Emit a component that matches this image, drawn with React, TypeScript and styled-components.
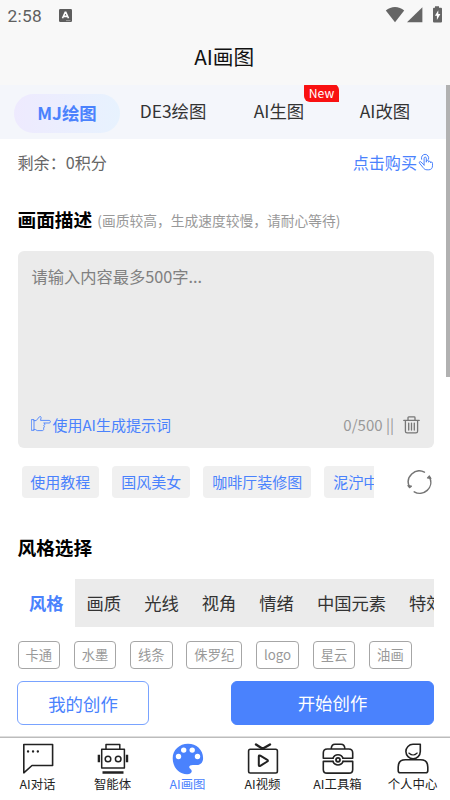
import React from "react";
import styled, { createGlobalStyle, css } from "styled-components";

const BLUE = "#4a82fd";

const GlobalStyle = createGlobalStyle`
  * { box-sizing: border-box; }
  html, body { margin: 0; height: 100%; overflow: hidden; background: #fff; }
  body, button, textarea {
    font-family: "Noto Sans CJK SC", "Noto Sans", sans-serif;
  }
  button { border: 0; padding: 0; margin: 0; background: none; color: inherit; font-size: inherit; }
  svg { display: block; flex: none; }
`;

const Screen = styled.div`
  display: flex;
  flex-direction: column;
  width: 450px;
  height: 800px;
  overflow: hidden;
  white-space: nowrap;
`;

const StatusBar = styled.header`
  display: flex;
  align-items: center;
  height: 30px;
  padding: 0 7px 0 7.5px;
  background: #f8f8f8;
  color: #5f5f5f;
  font: 17.3px/30px Roboto, sans-serif;
`;
const Clock = styled.span`
  width: 51px;
  letter-spacing: 0.3px;
  padding-top: 1px;
`;
const Spacer = styled.div`
  flex: 1;
`;
const TitleBar = styled.h1`
  height: 55px;
  margin: 0;
  padding-right: 1.5px;
  background: #f8f8f8;
  color: #111;
  font-size: 20.7px;
  font-weight: 400;
  line-height: 53px;
  text-align: center;
`;

const Page = styled.main`
  display: flex;
  height: 652px;
`;
const Content = styled.div`
  width: 446px;
  overflow: hidden;
`;
const ScrollTrack = styled.div`
  width: 4px;
  background: linear-gradient(#f4f6fb 54px, #fff 54px);
`;
const ScrollThumb = styled.div`
  height: 292px;
  background: #b1b1b1;
`;

const ModeTabs = styled.nav`
  display: grid;
  grid-template-columns: repeat(4, 106px);
  align-items: center;
  height: 54px;
  padding: 3px 0 0 14px;
  background: #f4f6fb;
`;
const ModeTab = styled.button<{ $active?: boolean }>`
  position: relative;
  height: 39px;
  border-radius: 20px;
  font-size: 17.4px;
  line-height: 34px;
  padding-bottom: 5px;
  color: #333;
  ${(p) =>
    p.$active &&
    css`
      padding-bottom: 1px;
      background: linear-gradient(90deg, #eeeafe, #e7f2fe);
      color: ${BLUE};
      font-weight: 700;
    `}
`;
const NewBadge = styled.span`
  position: absolute;
  left: 78px;
  top: -10px;
  width: 35px;
  height: 18px;
  border-radius: 2px 6px 0 6px;
  background: #f91111;
  color: #fff;
  font-size: 12.2px;
  line-height: 19px;
`;

const Body = styled.div`
  padding: 0 12px 0 17.5px;
`;
const Balance = styled.div`
  display: flex;
  justify-content: space-between;
  height: 46px;
  font-size: 16.1px;
  line-height: 46px;
  color: #666;
`;
const BuyLink = styled.a`
  display: flex;
  align-items: center;
  gap: 1px;
  color: ${BLUE};
  line-height: 45px;
`;
const Heading = styled.h2<{ $height: number; $lift?: number }>`
  display: flex;
  align-items: center;
  height: ${(p) => p.$height}px;
  padding-bottom: ${(p) => p.$lift ?? 0}px;
  margin: 0;
  color: #000;
  font-size: 18.7px;
  font-weight: 700;
`;
const Hint = styled.small`
  margin-left: 5px;
  padding-top: 3px;
  color: #999;
  font-size: 13.75px;
  font-weight: 400;
`;

const Prompt = styled.section`
  display: flex;
  flex-direction: column;
  justify-content: space-between;
  height: 197px;
  padding: 11px 14px 9px 14px;
  border-radius: 6px;
  background: #ebebeb;
`;
const Placeholder = styled.div`
  color: #808080;
  font-size: 16.25px;
  line-height: 28px;
`;
const PromptFooter = styled.div`
  display: flex;
  align-items: center;
  height: 30px;
  font-size: 15px;
`;
const Generate = styled.button`
  display: flex;
  align-items: center;
  gap: 1.5px;
  margin-left: -0.5px;
  color: ${BLUE};
  font-size: 15px;
`;
const Counter = styled.span`
  margin-right: 9px;
  color: #999;
  font-size: 15px;
`;

const Suggestions = styled.div`
  display: flex;
  align-items: center;
  height: 68px;
  padding-left: 4px;
`;
const ChipRow = styled.div`
  display: flex;
  gap: 13.6px;
  width: 352.5px;
  margin-right: 32.5px;
  overflow: hidden;
`;
const Chip = styled.button`
  flex: none;
  height: 32px;
  padding: 0 8.7px;
  border-radius: 4px;
  background: #f0f0f0;
  color: ${BLUE};
  font-size: 15px;
  line-height: 32px;
`;

const StyleTabs = styled.div`
  display: flex;
  height: 48px;
  overflow: hidden;
  background: #ebebeb;
`;
const StyleTab = styled.button<{ $active?: boolean }>`
  flex: none;
  padding: 0 11.5px;
  color: #333;
  font-size: 17.3px;
  line-height: 48px;
  ${(p) =>
    p.$active &&
    css`
      background: #fff;
      color: ${BLUE};
      font-weight: 700;
    `}
`;
const TagRow = styled.div`
  display: flex;
  gap: 13.7px;
  margin-top: 14px;
`;
const Tag = styled.button`
  height: 28px;
  padding: 0 7px;
  border: 1px solid #a6a6a6;
  border-radius: 4px;
  color: #999;
  font-size: 13.3px;
  line-height: 24px;
`;
const Actions = styled.div`
  display: flex;
  justify-content: space-between;
  margin: 12px 0 0 -0.5px;
`;
const Action = styled.button<{ $primary?: boolean }>`
  width: ${(p) => (p.$primary ? 203 : 132)}px;
  height: 44px;
  border: 1px solid ${(p) => (p.$primary ? BLUE : "#79a3ff")};
  border-radius: 6px;
  background: ${(p) => (p.$primary ? BLUE : "#fff")};
  color: ${(p) => (p.$primary ? "#fff" : BLUE)};
  font-size: 17.4px;
  line-height: ${(p) => (p.$primary ? 42 : 44)}px;
`;

const BottomNav = styled.nav`
  display: grid;
  grid-template-columns: repeat(6, 75px);
  height: 63px;
  border-top: 1px solid #bcbcbc;
  box-shadow: 0 -1px 0 #dedede;
  position: relative;
`;
const NavItem = styled.button<{ $active?: boolean }>`
  display: flex;
  flex-direction: column;
  align-items: center;
  padding-top: 5px;
  color: ${(p) => (p.$active ? BLUE : "#222")};
  font-size: 12.4px;
  line-height: 18px;
`;
const NavLabel = styled.span`
  margin-top: 0;
`;

const stroke = {
  fill: "none",
  stroke: "currentColor",
  strokeLinecap: "round",
  strokeLinejoin: "round",
} as const;

const KeyboardIcon = () => (
  <svg width="13" height="13" viewBox="0 0 13 13">
    <rect width="13" height="13" rx="1.2" fill="#5d5d5d" />
    <path d="M3.5 9.3 6.2 3.2h.6l2.7 6.1M4.6 7.4h3.8" fill="none" stroke="#fff" strokeWidth="1.6" />
    <path d="M7 11.6h4.5" stroke="#aaa" strokeWidth=".8" />
  </svg>
);
const StatusIcons = () => (
  <svg width="58" height="18" viewBox="0 0 58 18" fill="#656565">
    <path d="M.8 4.6C6-.2 14-.2 19.2 4.6L10 16.2Z" />
    <path d="M37.4 1.3v15H22Z" />
    <path d="M50 .2h4v1.6h2q1 0 1 1v12.7q0 1-1 1h-7q-1 0-1-1V2.8q0-1 1-1h1Z" />
    <path d="m53.3 4.2-3.4 5.6h2v4.1l3.5-5.8h-2.1Z" fill="#fff" />
  </svg>
);
const TapIcon = () => (
  <svg width="16" height="18" viewBox="0 0 16 18" {...stroke} strokeWidth="1">
    <path d="M6.1 12V5.2a1.1 1.1 0 0 1 2.2 0v4l.2-1a1 1 0 0 1 2 .2v.8a1 1 0 0 1 2 .1v.7a1 1 0 0 1 2 .3v2.5c0 2.5-1.5 4-3.7 4H9c-1.8 0-2.8-.7-3.9-2.2L1.4 10c-.5-1.2.7-1.9 1.5-1.1L6.1 12" />
    <path d="M3.6 6.3a3.7 3.7 0 1 1 7-.1" />
  </svg>
);
const PointIcon = () => (
  <svg width="20" height="16" viewBox="0 0 20 16" {...stroke} strokeWidth=".9">
    <path d="M.7 3.6H3v10.7H.7ZM3 4.6h2.2L8.4.8c.7-.8 2-.1 1.7 1L9.5 4.4h8.7c1.6 0 1.6 2.6 0 2.6h-5.5c1.5.2 1.5 2.4-.1 2.5 1.2.5 1 2.4-.4 2.5 1.1.6.5 2.6-.8 2.6H6.2L4.5 13.6H3" />
  </svg>
);
const TrashIcon = () => (
  <svg width="17" height="20" viewBox="0 -2 17 20" {...stroke} stroke="#777" strokeWidth="1.3">
    <path d="M.8 4.4h15.4M5 4V1.7q0-.8.8-.8h5.4q.8 0 .8.8V4M2.4 4.6v10.6q0 1.7 1.7 1.7h8.8q1.7 0 1.7-1.7V4.6M5.7 7.1v7M8.5 7.1v7M11.3 7.1v7" />
  </svg>
);
const RefreshIcon = () => (
  <svg width="25" height="25" viewBox="0 0 25 25" {...stroke} stroke="#757575" strokeWidth="1.5">
    <path d="M17.4 2.2A11 11 0 0 0 2.3 16.5M7.2 21.8A11 11 0 0 0 22.7 7.6" />
    <path d="m.9 15.7 1.6 2 1.9-1.5ZM20.5 8l1.9-2 1.5 2.5Z" fill="#757575" strokeWidth="1.2" />
  </svg>
);

const ChatIcon = () => (
  <svg width="32" height="32" viewBox="0 0 32 32" {...stroke} strokeWidth="1.6">
    <path d="M1.8 1.5h28.8v21H10l-8.2 7.3Z" />
    <path d="M6 8.5h.1M11 8.5h.1M15.8 8.5h.1" strokeWidth="2.3" />
  </svg>
);
const RobotIcon = () => (
  <svg width="32" height="32" viewBox="0 0 32 32" {...stroke} strokeWidth="1.5">
    <path d="M4.7 6.3h22.7v18.8H4.7ZM9 6V1.4h13.8V6" />
    <circle cx="11" cy="16" r="2.8" />
    <circle cx="21.2" cy="16" r="2.8" />
    <path d="M1.9 11.7v7.5M30 11.7v7.5M5.5 29.5h21" strokeWidth="2.4" strokeLinecap="butt" />
  </svg>
);
const PaletteIcon = () => (
  <svg width="32" height="32" viewBox="0 0 32 32">
    <path d="M16 .8C7.4.8.7 7.1.7 15.3c0 8.8 6.2 16 14.4 16 4.8 0 5.8-3.4 3.4-5.3-2.6-2.1-1-3.9 2.3-3.9h3.5c4.2 0 6.8-2.3 6.8-7C31.1 6.9 24.5.8 16 .8Z" fill={BLUE} />
    <g fill="#fff">
      <circle cx="6.5" cy="13.5" r="2.7" />
      <circle cx="11.7" cy="7.1" r="2.7" />
      <circle cx="20.2" cy="7.1" r="2.7" />
      <circle cx="25.5" cy="13.5" r="2.7" />
    </g>
  </svg>
);
const VideoIcon = () => (
  <svg width="32" height="32" viewBox="0 0 32 32" {...stroke} strokeWidth="1.6">
    <rect x="1.6" y="6.3" width="28.8" height="23.7" rx="1.7" />
    <path d="m9 1.5 6.6 4.2L23 1.5" strokeWidth="2.4" />
    <path d="M11.8 13.5q0-1.7 1.5-.8l7 4.2q1.2.8 0 1.6l-7 4.3q-1.5.8-1.5-.9Z" strokeWidth="2" />
  </svg>
);
const ToolboxIcon = () => (
  <svg width="32" height="32" viewBox="0 0 32 32" {...stroke} strokeWidth="1.6">
    <path d="M9.2 6c.2-3.4 1.3-4.7 3.8-4.7h6c2.5 0 3.7 1.3 3.9 4.7M1.3 15.3V10q0-4 4-4h21.4q4 0 4 4v5.3H21M1.3 15.3H11M11 18.4H1.3v8q0 3.7 3.7 3.7h22q3.7 0 3.7-3.7v-8H21" />
    <path d="M11 15.3a5.3 5.3 0 0 1 10 0M11 18.4a5.3 5.3 0 0 0 10 0" />
    <circle cx="16" cy="16.8" r="2" strokeWidth="1.8" />
  </svg>
);
const PersonIcon = () => (
  <svg width="32" height="32" viewBox="0 0 32 32" {...stroke} strokeWidth="1.6">
    <path d="M23.3 1.3H16a7.2 7.2 0 1 0 7.3 7.2ZM3.2 29.8q-2 0-2-2V24q0-7.2 7.2-7.2h15.2q7.2 0 7.2 7.2v3.8q0 2-2 2Z" />
    <path d="M11.8 10q4.3 4 8.4 0" strokeWidth="1.1" />
  </svg>
);

const modes = ["MJ绘图", "DE3绘图", "AI生图", "AI改图"];
const suggestions = ["使用教程", "国风美女", "咖啡厅装修图", "泥泞中的小路"];
const categories = ["风格", "画质", "光线", "视角", "情绪", "中国元素", "特效"];
const tags = ["卡通", "水墨", "线条", "侏罗纪", "logo", "星云", "油画"];
const navItems = [
  { label: "AI对话", Icon: ChatIcon },
  { label: "智能体", Icon: RobotIcon },
  { label: "AI画图", Icon: PaletteIcon },
  { label: "AI视频", Icon: VideoIcon },
  { label: "AI工具箱", Icon: ToolboxIcon },
  { label: "个人中心", Icon: PersonIcon },
];

export default function App() {
  return (
    <Screen>
      <GlobalStyle />
      <StatusBar>
        <Clock>2:58</Clock>
        <KeyboardIcon />
        <Spacer />
        <StatusIcons />
      </StatusBar>
      <TitleBar>AI画图</TitleBar>
      <Page>
        <Content>
          <ModeTabs>
            {modes.map((m, i) => (
              <ModeTab key={m} $active={i === 0}>
                {m}
                {i === 2 && <NewBadge>New</NewBadge>}
              </ModeTab>
            ))}
          </ModeTabs>
          <Body>
            <Balance>
              <span>剩余：0积分</span>
              <BuyLink>
                点击购买
                <TapIcon />
              </BuyLink>
            </Balance>
            <Heading $height={66}>
              画面描述<Hint>(画质较高，生成速度较慢，请耐心等待)</Hint>
            </Heading>
            <Prompt>
              <Placeholder>请输入内容最多500字...</Placeholder>
              <PromptFooter>
                <Generate>
                  <PointIcon />
                  使用AI生成提示词
                </Generate>
                <Spacer />
                <Counter>0/500 ||</Counter>
                <TrashIcon />
              </PromptFooter>
            </Prompt>
            <Suggestions>
              <ChipRow>
                {suggestions.map((s) => (
                  <Chip key={s}>{s}</Chip>
                ))}
              </ChipRow>
              <RefreshIcon />
            </Suggestions>
            <Heading $height={63} $lift={2}>风格选择</Heading>
            <StyleTabs>
              {categories.map((c, i) => (
                <StyleTab key={c} $active={i === 0}>
                  {c}
                </StyleTab>
              ))}
            </StyleTabs>
            <TagRow>
              {tags.map((t) => (
                <Tag key={t}>{t}</Tag>
              ))}
            </TagRow>
            <Actions>
              <Action>我的创作</Action>
              <Action $primary>开始创作</Action>
            </Actions>
          </Body>
        </Content>
        <ScrollTrack>
          <ScrollThumb />
        </ScrollTrack>
      </Page>
      <BottomNav>
        {navItems.map(({ label, Icon }, i) => (
          <NavItem key={label} $active={i === 2}>
            <Icon />
            <NavLabel>{label}</NavLabel>
          </NavItem>
        ))}
      </BottomNav>
    </Screen>
  );
}
